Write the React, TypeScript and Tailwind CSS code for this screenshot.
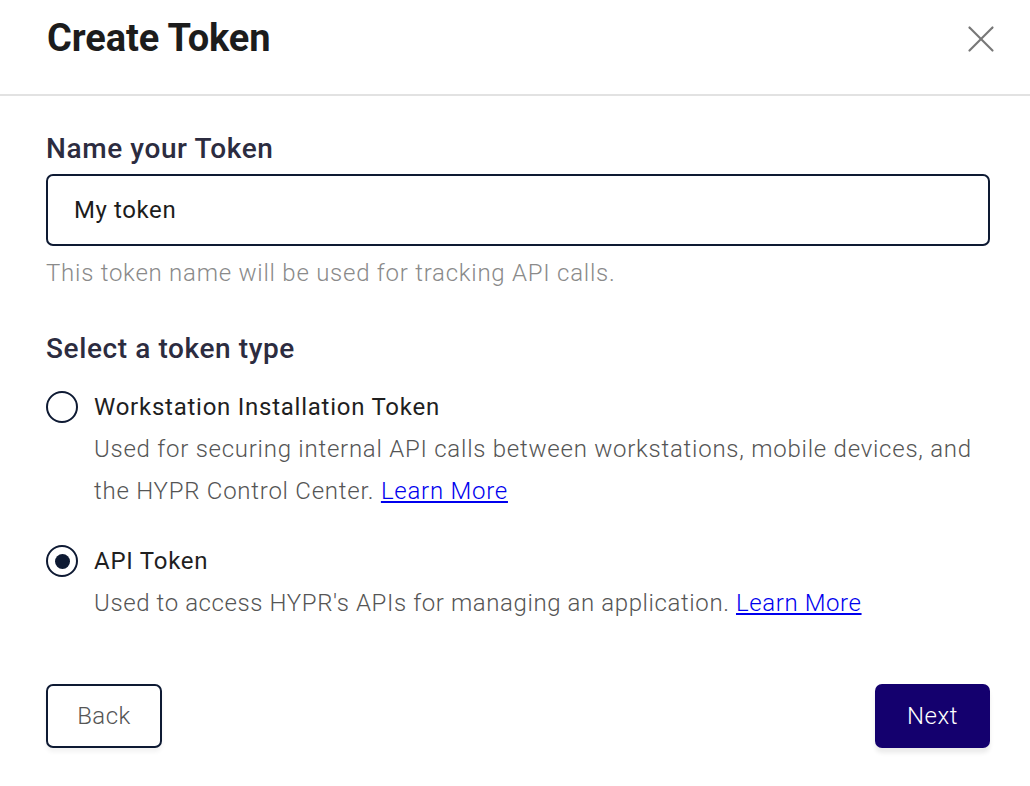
import { X } from "lucide-react";

export default function App() {
  return (
    <div className="min-h-screen w-full bg-white font-['Roboto',sans-serif]">
      {/* Header */}
      <div className="flex h-[96px] items-start justify-between border-b-2 border-[#e2e2e2] pl-[47px] pr-[26px]">
        <h1 className="pt-[18px] text-[38px] font-bold leading-[40px] tracking-[-0.1px] text-[#1c1c1c]">
          Create Token
        </h1>
        <X className="mt-[16px] h-[46px] w-[46px] text-[#777777]" strokeWidth={1.15} />
      </div>

      <div className="pl-[46px] pr-[40px] pt-[36px]">
        {/* Name */}
        <label className="block text-[28px] font-medium leading-[34px] tracking-[0.6px] text-[#2c2c40]">
          Name your Token
        </label>
        <div className="mt-[8px] flex h-[72px] items-center rounded-[7px] border-2 border-[#0e1a33] px-[26px] text-[24px] tracking-[0.6px] text-[#1c1c1c]">
          My token
        </div>
        <p className="mt-[11px] text-[24px] font-light leading-[32px] tracking-[0.75px] text-[#8a8a8a]">
          This token name will be used for tracking API calls.
        </p>

        {/* Token type */}
        <h2 className="mt-[43px] text-[28px] font-medium leading-[34px] tracking-[0.6px] text-[#2c2c40]">
          Select a token type
        </h2>

        <div className="mt-[24px] flex gap-[16px]">
          <div className="mt-[1px] h-[32px] w-[32px] shrink-0 rounded-full border-2 border-[#0e1a33]" />
          <div>
            <div className="text-[24px] leading-[34px] tracking-[0.75px] text-[#1f1f1f]">
              Workstation Installation Token
            </div>
            <p className="mt-[4px] text-[24px] font-light leading-[42px] tracking-[0.75px] text-[#555555]">
              Used for securing internal API calls between workstations, mobile devices, and the HYPR Control
              Center. <a className="text-[#0000ee] underline">Learn More</a>
            </p>
          </div>
        </div>

        <div className="mt-[32px] flex gap-[16px]">
          <div className="mt-[1px] flex h-[32px] w-[32px] shrink-0 items-center justify-center rounded-full border-2 border-[#0e1a33]">
            <div className="h-[15px] w-[15px] rounded-full bg-[#0e1a33]" />
          </div>
          <div>
            <div className="text-[24px] leading-[34px] tracking-[0.75px] text-[#1f1f1f]">API Token</div>
            <p className="mt-[4px] text-[24px] font-light leading-[42px] tracking-[0.6px] text-[#555555]">
              Used to access HYPR's APIs for managing an application.{" "}
              <a className="text-[#0000ee] underline">Learn More</a>
            </p>
          </div>
        </div>

        {/* Actions */}
        <div className="mt-[60px] flex justify-between">
          <button className="h-[64px] w-[116px] rounded-[7px] border-2 border-[#0e1a33] text-[24px] font-light tracking-[0.5px] text-[#555555] shadow-[0_4px_4px_rgba(0,0,0,0.05)]">
            Back
          </button>
          <button className="h-[64px] w-[115px] rounded-[7px] bg-[#14006e] text-[24px] font-light tracking-[0.5px] text-white shadow-[0_5px_4px_rgba(0,0,0,0.08)]">
            Next
          </button>
        </div>
      </div>
    </div>
  );
}
